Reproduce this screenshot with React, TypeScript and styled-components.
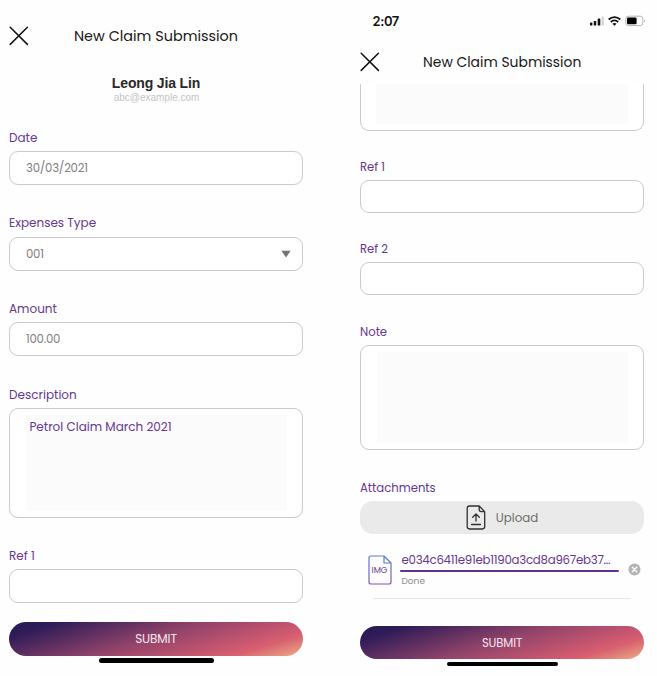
import React from "react";
import styled, { createGlobalStyle } from "styled-components";

const GlobalStyle = createGlobalStyle`
  * { box-sizing: border-box; }
  body { margin: 0; background: #fefefe; font-family: Poppins, Inter, sans-serif; }
`;

const Page = styled.main`
  display: flex;
  width: 657px;
  height: 676px;
  overflow: hidden;
  background: #fefefe;
`;

const Phone = styled.section<{ $left: number; $width: number; $text: number }>`
  display: flex;
  flex-direction: column;
  flex: none;
  width: ${(p) => p.$width}px;
  margin-left: ${(p) => p.$left}px;
  font-size: ${(p) => p.$text}px;
`;

const StatusBar = styled.div`
  display: flex;
  align-items: center;
  justify-content: space-between;
  height: 42px;
  margin-right: -2px;
  padding-left: 12.5px;
`;

const Clock = styled.span`
  font: 600 13px/16px Inter, sans-serif;
  letter-spacing: -0.4px;
  color: #111;
`;

const Header = styled.header<{ $top: number }>`
  display: flex;
  align-items: center;
  height: 20px;
  margin-top: ${(p) => p.$top}px;
`;

const IconButton = styled.button`
  display: flex;
  flex: none;
  padding: 0;
  border: 0;
  background: none;
`;

const Title = styled.h1<{ $left: number; $size: number }>`
  margin: 0 0 0 ${(p) => p.$left}px;
  font-size: ${(p) => p.$size}px;
  font-weight: 400;
  line-height: 20px;
  white-space: nowrap;
  color: #181818;
`;

const Profile = styled.div`
  display: flex;
  flex-direction: column;
  align-items: center;
  height: 32px;
  margin-top: 28px;
  font-family: "Liberation Sans", Arial, sans-serif;
`;

const Name = styled.strong`
  font-size: 14px;
  line-height: 18px;
  letter-spacing: -0.15px;
  color: #292929;
`;

const Email = styled.span`
  padding-left: 1px;
  font-size: 10px;
  line-height: 12px;
  color: #c4c4c4;
`;

const Field = styled.div<{ $gap: number }>`
  display: flex;
  flex-direction: column;
  margin-top: ${(p) => p.$gap}px;
`;

const Label = styled.label`
  height: 23px;
  padding-top: 0.8px;
  line-height: 18px;
  color: #65388f;
`;

const InputBox = styled.div<{ $height: number }>`
  display: flex;
  align-items: center;
  justify-content: space-between;
  height: ${(p) => p.$height}px;
  padding: 1px 11px 0 16px;
  border: 1px solid #cacaca;
  border-radius: 9px;
  background: #fff;
  font-size: 11.7px;
  letter-spacing: -0.24px;
  color: #808080;
`;

const AreaBox = styled.div<{ $height: number; $clipped?: boolean }>`
  display: flex;
  height: ${(p) => p.$height}px;
  padding: ${(p) => (p.$clipped ? "0 15px 6px" : "6px 15px 6px 16px")};
  border: 1px solid #cacaca;
  border-top-width: ${(p) => (p.$clipped ? 0 : 1)}px;
  border-radius: ${(p) => (p.$clipped ? "0 0 9px 9px" : "9px")};
  background: #fff;
`;

const AreaText = styled.div`
  flex: 1;
  padding: 3px 3.4px;
  background: #fbfbfb;
  line-height: 18px;
  color: #65388f;
`;

const UploadButton = styled.button`
  display: flex;
  align-items: center;
  justify-content: center;
  gap: 10px;
  height: 33px;
  padding: 0;
  border: 0;
  border-radius: 13px;
  background: #eaeaea;
  font: 400 11.8px/18px Poppins, Inter, sans-serif;
  color: #6c6c6c;
`;

const Attachment = styled.div`
  display: flex;
  align-items: flex-start;
  height: 47px;
  margin: 18px 13px 0;
  border-bottom: 1.5px solid #e6e6e6;
`;

const FileIconSlot = styled.div`
  display: flex;
  flex: none;
  width: 27px;
  margin: 3px 0 0 -5px;
`;

const FileInfo = styled.div`
  display: flex;
  flex-direction: column;
  width: 219px;
  margin-left: 5px;
`;

const FileName = styled.span`
  height: 17.5px;
  padding-left: 1.5px;
  font-size: 11.8px;
  line-height: 17px;
  letter-spacing: -0.27px;
  white-space: nowrap;
  color: #65388f;
`;

const Progress = styled.div`
  height: 2px;
  border-radius: 1px;
  background: #65308f;
`;

const Status = styled.span`
  padding-left: 1.5px;
  font-size: 9px;
  line-height: 18px;
  color: #8c8c8c;
`;

const RemoveSlot = styled.div`
  flex: none;
  display: flex;
  margin: 11px -10px 0 9px;
`;

const Submit = styled.button<{ $height: number; $gap: number; $text: number }>`
  height: ${(p) => p.$height}px;
  margin-top: ${(p) => p.$gap}px;
  padding: 1px 0 0;
  border: 0;
  border-radius: 17px;
  background: linear-gradient(163deg, #2b1b57 5%, #2f1c58 12%, #91436a 48%, #d35a70 79%, #d8626f 83%, #eaa082 97%);
  font: 400 ${(p) => p.$text}px/18px Poppins, Inter, sans-serif;
  letter-spacing: -0.1px;
  color: #f5e8ef;
`;

const HomeIndicator = styled.div<{ $width: number }>`
  align-self: center;
  width: ${(p) => p.$width}px;
  height: 4.5px;
  margin-top: 2.5px;
  border-radius: 3px;
  background: #000;
`;

const CloseIcon = () => (
  <svg width="20" height="20" viewBox="0 0 20 20" fill="none" stroke="#111" strokeWidth="1.5" strokeLinecap="round">
    <path d="M1.2 1.2 18.4 18.4M18.4 1.2 1.2 18.4" />
  </svg>
);

const DropdownIcon = () => (
  <svg width="10" height="8" viewBox="0 0 10 8">
    <path d="M.4.7H9.6L5 7.5Z" fill="#747474" />
  </svg>
);

const StatusIcons = () => (
  <svg width="56" height="12" viewBox="0 0 56 12">
    <g fill="#111">
      <rect x="0" y="7.5" width="2.4" height="3" rx=".6" />
      <rect x="3.8" y="6" width="2.4" height="4.5" rx=".6" />
      <rect x="7.7" y="3.5" width="2.6" height="7" rx=".6" />
      <rect x="11.6" y="1.5" width="2.2" height="9" rx=".6" fill="#d3d3d3" />
    </g>
    <g fill="none" stroke="#111" strokeWidth="1.8">
      <path d="M18.7 4.5c3.4-3.2 8.2-3.2 11.6 0M20.8 7c2.2-2 5.2-2 7.4 0" />
    </g>
    <path d="M22.4 8.7c1.2-1.1 3-1.1 4.2 0l-2.1 2.1Z" fill="#111" />
    <rect x="35.8" y="1.2" width="17" height="9.4" rx="2.5" fill="none" stroke="#b5b5b5" />
    <rect x="37" y="2.5" width="9.6" height="6.8" rx="1.2" fill="#000" />
    <path d="M54 4.5c1.2.4 1.2 2.5 0 2.9Z" fill="#aaa" />
  </svg>
);

const UploadIcon = () => (
  <svg width="20" height="25" viewBox="0 0 20 25" fill="none" stroke="#303030" strokeWidth="1.3" strokeLinejoin="round" strokeLinecap="round">
    <path d="M13.2 1H3.5Q1.2 1 1.2 3.3V21.6Q1.2 24 3.5 24H16.3Q18.7 24 18.7 21.6V6.7ZM13.2 1V4.6Q13.2 6.7 15.2 6.7H18.7M5.5 19.5H14.5M10 16V9M6.7 12.2 10 8.9 13.3 12.2" />
  </svg>
);

const FileIcon = () => (
  <svg width="24" height="30" viewBox="0 0 24 30">
    <defs>
      <linearGradient id="file-stroke" x1="0" y1="0" x2="0" y2="1">
        <stop offset="0" stopColor="#5683c4" />
        <stop offset="1" stopColor="#8a56a5" />
      </linearGradient>
    </defs>
    <path d="M16 1H3Q1 1 1 3V27Q1 29 3 29H21Q23 29 23 27V8ZM16 1V8H23" fill="none" stroke="url(#file-stroke)" strokeWidth="1.2" strokeLinejoin="round" />
    <text x="11.5" y="18.4" textAnchor="middle" fontFamily="Poppins, Inter, sans-serif" fontSize="8.4" fill="#65388f">IMG</text>
  </svg>
);

const RemoveIcon = () => (
  <svg width="13" height="13" viewBox="0 0 13 13">
    <circle cx="6.5" cy="6.5" r="6" fill="#b3b3b3" />
    <path d="M4.3 4.3 8.7 8.7M8.7 4.3 4.3 8.7" stroke="#fff" strokeWidth="1.4" strokeLinecap="round" />
  </svg>
);

export default function App() {
  return (
    <Page>
      <GlobalStyle />
      <Phone $left={9} $width={294} $text={12}>
        <Header $top={26}>
          <IconButton aria-label="Close"><CloseIcon /></IconButton>
          <Title $left={45} $size={14.4}>New Claim Submission</Title>
        </Header>
        <Profile>
          <Name>Leong Jia Lin</Name>
          <Email>abc@example.com</Email>
        </Profile>
        <Field $gap={22}>
          <Label>Date</Label>
          <InputBox $height={34}>30/03/2021</InputBox>
        </Field>
        <Field $gap={28.6}>
          <Label>Expenses Type</Label>
          <InputBox $height={34}>001<DropdownIcon /></InputBox>
        </Field>
        <Field $gap={28.6}>
          <Label>Amount</Label>
          <InputBox $height={34}>100.00</InputBox>
        </Field>
        <Field $gap={28.6}>
          <Label>Description</Label>
          <AreaBox $height={110}><AreaText>Petrol Claim March 2021</AreaText></AreaBox>
        </Field>
        <Field $gap={28.4}>
          <Label>Ref 1</Label>
          <InputBox $height={34} />
        </Field>
        <Submit $height={34} $gap={18.8} $text={12}>SUBMIT</Submit>
        <HomeIndicator $width={115} />
      </Phone>
      <Phone $left={57} $width={284} $text={11.65}>
        <StatusBar><Clock>2:07</Clock><StatusIcons /></StatusBar>
        <Header $top={9.5}>
          <IconButton aria-label="Close"><CloseIcon /></IconButton>
          <Title $left={43} $size={13.9}>New Claim Submission</Title>
        </Header>
        <Field $gap={12.5}>
          <AreaBox $height={46.5} $clipped><AreaText /></AreaBox>
        </Field>
        <Field $gap={26.7}>
          <Label>Ref 1</Label>
          <InputBox $height={33} />
        </Field>
        <Field $gap={26.2}>
          <Label>Ref 2</Label>
          <InputBox $height={33} />
        </Field>
        <Field $gap={26.8}>
          <Label>Note</Label>
          <AreaBox $height={105}><AreaText /></AreaBox>
        </Field>
        <Field $gap={28.3}>
          <Label>Attachments</Label>
          <UploadButton><UploadIcon />Upload</UploadButton>
        </Field>
        <Attachment>
          <FileIconSlot><FileIcon /></FileIconSlot>
          <FileInfo>
            <FileName>e034c6411e91eb1190a3cd8a967eb37...</FileName>
            <Progress />
            <Status>Done</Status>
          </FileInfo>
          <RemoveSlot><RemoveIcon /></RemoveSlot>
        </Attachment>
        <Submit $height={33} $gap={27} $text={11.6}>SUBMIT</Submit>
        <HomeIndicator $width={111} />
      </Phone>
    </Page>
  );
}
